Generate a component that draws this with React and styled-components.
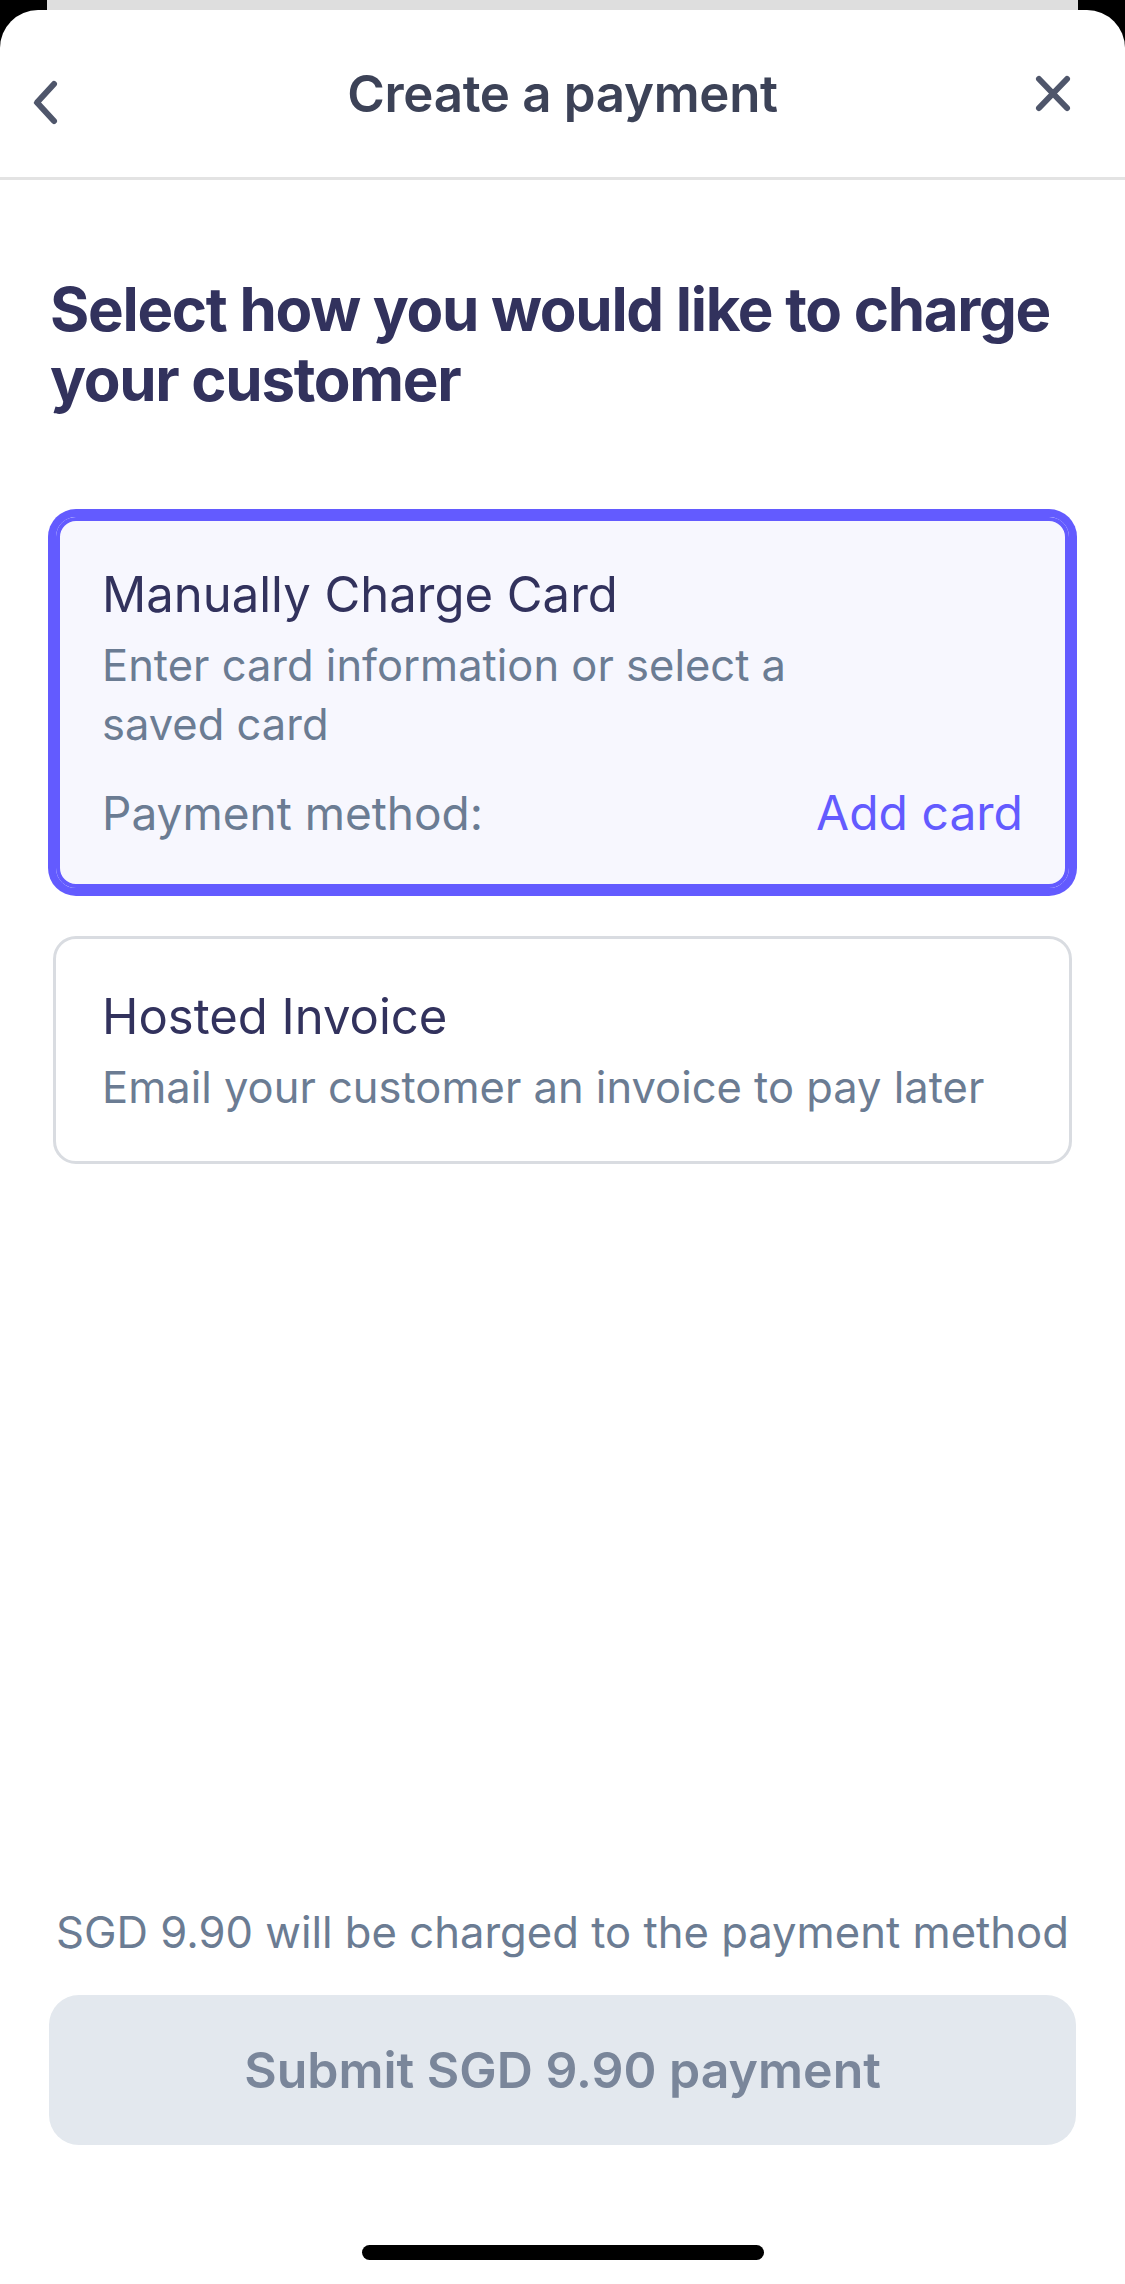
import styled, { createGlobalStyle } from 'styled-components'

const GlobalStyle = createGlobalStyle`
  html, body {
    margin: 0;
    padding: 0;
    background: #000;
  }
  body {
    font-family: Inter, "Noto Sans", sans-serif;
    -webkit-font-smoothing: antialiased;
  }
`

const Screen = styled.div`
  width: 1125px;
  height: 2284px;
  display: flex;
  flex-direction: column;
  background: #000;
  overflow: hidden;
`

const BehindSheet = styled.div`
  height: 10px;
  margin: 0 47px;
  background: #dedede;
`

const Sheet = styled.div`
  flex: 1;
  display: flex;
  flex-direction: column;
  background: #fff;
  border-radius: 38px 38px 0 0;
`

const Header = styled.header`
  height: 167px;
  display: grid;
  grid-template-columns: 1fr auto 1fr;
  align-items: center;
  padding: 0 49px;
  border-bottom: 3px solid #e3e3e3;
`

const IconButton = styled.button`
  display: flex;
  padding: 0;
  border: 0;
  background: none;
  color: #4f566b;
  justify-self: ${p => (p.$end ? 'end' : 'start')};
  margin-top: ${p => p.$offsetY || 0}px;
  margin-left: ${p => p.$offsetX || 0}px;
`

const Title = styled.h1`
  margin: 0;
  font-size: 51px;
  font-weight: 600;
  color: #3c4257;
  letter-spacing: -0.3px;
`

const Content = styled.main`
  display: flex;
  flex-direction: column;
  padding: 0 50px;
`

const Heading = styled.h2`
  margin: 94px 0 100px;
  font-size: 60px;
  line-height: 70px;
  font-weight: 700;
  color: #32325d;
  letter-spacing: -1.3px;
`

const Option = styled.div`
  margin: 0 3px ${p => p.$gap || 0}px;
  padding: 49px 46px 44px;
  border: 3px solid ${p => (p.$selected ? '#635bff' : '#d9dce1')};
  border-radius: 23px;
  background: ${p => (p.$selected ? '#f7f7fe' : '#fff')};
  box-shadow: ${p => (p.$selected ? '0 0 0 5px #635bff, inset 0 0 0 4px #635bff' : 'none')};
`

const OptionTitle = styled.div`
  font-size: 49px;
  line-height: 58px;
  color: #32325d;
  margin-bottom: 12px;
`

const OptionText = styled.div`
  max-width: ${p => (p.$narrow ? '760px' : 'none')};
  font-size: 43.5px;
  line-height: 59px;
  color: #6b7c93;
`

const MethodRow = styled.div`
  display: flex;
  justify-content: space-between;
  align-items: baseline;
  margin-top: 28px;
  line-height: 62px;
`

const MethodLabel = styled.span`
  font-size: 46px;
  color: #6b7c93;
`

const AddCard = styled.a`
  font-size: 48px;
  color: #635bff;
  text-decoration: none;
`

const Footer = styled.footer`
  margin-top: auto;
  display: flex;
  flex-direction: column;
  align-items: center;
  padding: 0 49px 24px;
`

const Notice = styled.p`
  margin: 0;
  font-size: 43.6px;
  line-height: 59px;
  color: #6b7c93;
  white-space: nowrap;
`

const SubmitButton = styled.button`
  width: 100%;
  height: 150px;
  margin-top: 33px;
  border: 0;
  border-radius: 30px;
  background: #e3e8ee;
  font-family: inherit;
  font-size: 50px;
  font-weight: 600;
  color: #7a869a;
`

const HomeIndicator = styled.div`
  width: 402px;
  height: 15px;
  margin-top: 100px;
  border-radius: 8px;
  background: #000;
`

const BackIcon = () => (
  <svg width="30" height="48" viewBox="0 0 30 48" fill="none">
    <path d="M24 6 L7 24.5 L24 43" stroke="currentColor" strokeWidth="6" strokeLinecap="round" strokeLinejoin="round" />
  </svg>
)

const CloseIcon = () => (
  <svg width="46" height="46" viewBox="0 0 46 46" fill="none">
    <path d="M9 8 L37 37 M37 8 L9 37" stroke="currentColor" strokeWidth="6" strokeLinecap="round" />
  </svg>
)

const App = () => {
  return (
    <Screen>
      <GlobalStyle />
      <BehindSheet />
      <Sheet>
        <Header>
          <IconButton $offsetY={17} $offsetX={-19}><BackIcon /></IconButton>
          <Title>Create a payment</Title>
          <IconButton $end><CloseIcon /></IconButton>
        </Header>
        <Content>
          <Heading>Select how you would like to charge your customer</Heading>
          <Option $selected $gap={45}>
            <OptionTitle>Manually Charge Card</OptionTitle>
            <OptionText $narrow>Enter card information or select a saved card</OptionText>
            <MethodRow>
              <MethodLabel>Payment method:</MethodLabel>
              <AddCard>Add card</AddCard>
            </MethodRow>
          </Option>
          <Option>
            <OptionTitle>Hosted Invoice</OptionTitle>
            <OptionText>Email your customer an invoice to pay later</OptionText>
          </Option>
        </Content>
        <Footer>
          <Notice>SGD 9.90 will be charged to the payment method</Notice>
          <SubmitButton>Submit SGD 9.90 payment</SubmitButton>
          <HomeIndicator />
        </Footer>
      </Sheet>
    </Screen>
  )
}

export default App
